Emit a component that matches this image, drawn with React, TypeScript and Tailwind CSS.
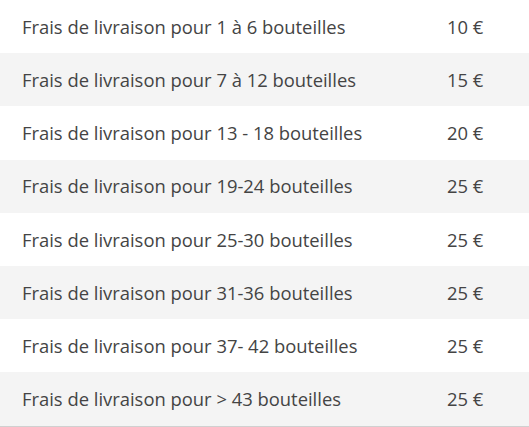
import React from 'react';

const rows = [
  { label: 'Frais de livraison pour 1 à 6 bouteilles', price: '10 €' },
  { label: 'Frais de livraison pour 7 à 12 bouteilles', price: '15 €' },
  { label: 'Frais de livraison pour 13 - 18 bouteilles', price: '20 €' },
  { label: 'Frais de livraison pour 19-24 bouteilles', price: '25 €' },
  { label: 'Frais de livraison pour 25-30 bouteilles', price: '25 €' },
  { label: 'Frais de livraison pour 31-36 bouteilles', price: '25 €' },
  { label: 'Frais de livraison pour 37- 42 bouteilles', price: '25 €' },
  { label: 'Frais de livraison pour > 43 bouteilles', price: '25 €' },
];

export default function App() {
  return (
    <div className="w-[529px] bg-white font-['Open_Sans',sans-serif] text-[18.4px] text-[#444]">
      <div className="flex flex-col border-b-2 border-[#d0d0d0]">
        {rows.map((row, i) => (
          <div
            key={i}
            className={
              'flex items-center h-[53.2px] ' + (i % 2 === 1 ? 'bg-[#f4f4f4]' : 'bg-white')
            }
          >
            <span className="pl-[22px] w-[447px] whitespace-nowrap">{row.label}</span>
            <span className="whitespace-nowrap">{row.price}</span>
          </div>
        ))}
      </div>
    </div>
  );
}
